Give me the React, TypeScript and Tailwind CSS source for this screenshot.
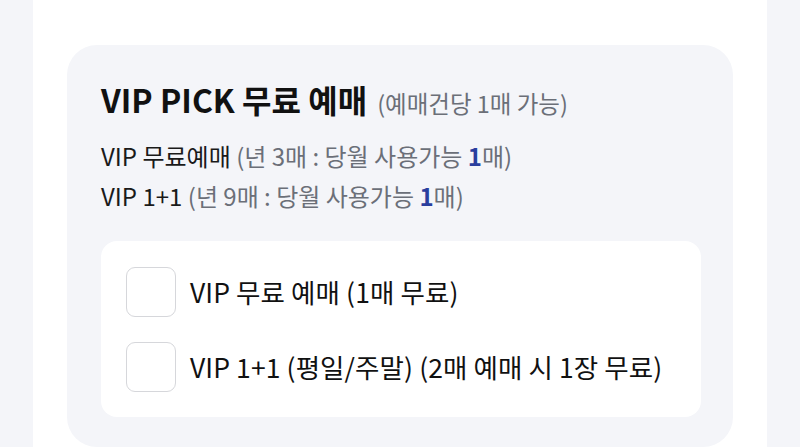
import React, { useState } from 'react';

const font = { fontFamily: '"Noto Sans CJK KR", "Noto Sans", sans-serif' };

export default function App() {
  const [checked, setChecked] = useState<Record<string, boolean>>({});

  const options = [
    { id: 'free', label: 'VIP 무료 예매 (1매 무료)' },
    { id: 'oneplus', label: 'VIP 1+1 (평일/주말) (2매 예매 시 1장 무료)' },
  ];

  return (
    <div className="min-h-[447px] bg-[#f4f5f9] flex justify-center" style={font}>
      <div className="w-[734px] bg-white px-[34px] pt-[45px] h-[447px] overflow-hidden">
        <div className="bg-[#f4f5f9] rounded-[30px] pl-[34px] pr-[32px] pt-[36px] pb-[30px]">
          <div className="flex items-baseline gap-[10px]">
            <h2 className="text-[32px] leading-[36px] font-bold text-[#111]">VIP PICK 무료 예매</h2>
            <span className="text-[23.5px] text-[#6b6f78]">(예매건당 1매 가능)</span>
          </div>

          <p className="mt-[15px] text-[24px] leading-[40px] text-[#1a1a1a]">
            VIP 무료예매{' '}
            <span className="text-[#6b6f78]">
              (년 3매 : 당월 사용가능 <b className="text-[#2a3e9e]">1</b>매)
            </span>
          </p>
          <p className="text-[24px] leading-[40px] text-[#1a1a1a]">
            VIP 1+1{' '}
            <span className="text-[#6b6f78]">
              (년 9매 : 당월 사용가능 <b className="text-[#2a3e9e]">1</b>매)
            </span>
          </p>

          <div className="mt-[25px] bg-white rounded-[16px] pl-[25px] pr-6 pt-[26px] pb-[25px] flex flex-col gap-[25px]">
            {options.map((opt) => (
              <label key={opt.id} className="flex items-center gap-[14px] cursor-pointer">
                <input
                  type="checkbox"
                  className="sr-only"
                  checked={!!checked[opt.id]}
                  onChange={(e) => setChecked({ ...checked, [opt.id]: e.target.checked })}
                />
                <span
                  className={
                    checked[opt.id]
                      ? 'w-[50px] h-[50px] rounded-[9px] border border-[#2a3e9e] bg-[#2a3e9e]'
                      : 'w-[50px] h-[50px] rounded-[9px] border border-[#d6d7db] bg-white'
                  }
                />
                <span className="text-[26.5px] leading-[36px] text-[#111] tracking-[0.1px]">{opt.label}</span>
              </label>
            ))}
          </div>
        </div>
      </div>
    </div>
  );
}
